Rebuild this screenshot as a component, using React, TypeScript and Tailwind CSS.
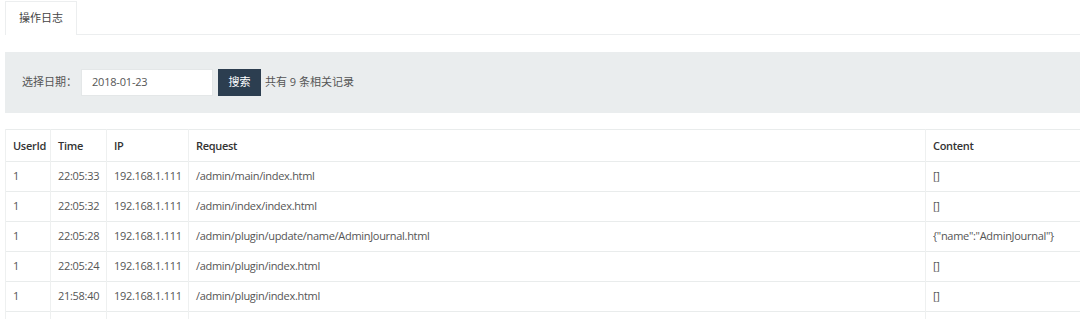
import React from "react";

const ROWS = [
  { uid: "1", time: "22:05:33", ip: "192.168.1.111", req: "/admin/main/index.html", content: "[]" },
  { uid: "1", time: "22:05:32", ip: "192.168.1.111", req: "/admin/index/index.html", content: "[]" },
  { uid: "1", time: "22:05:28", ip: "192.168.1.111", req: "/admin/plugin/update/name/AdminJournal.html", content: '{"name":"AdminJournal"}' },
  { uid: "1", time: "22:05:24", ip: "192.168.1.111", req: "/admin/plugin/index.html", content: "[]" },
  { uid: "1", time: "21:58:40", ip: "192.168.1.111", req: "/admin/plugin/index.html", content: "[]" },
];

export default function App() {
  return (
    <div
      className="w-[1080px] h-[319px] overflow-hidden bg-white text-[11px] text-[#555]"
      style={{ fontFamily: '"Open Sans", "Noto Sans CJK SC", sans-serif' }}
    >
      {/* tabs */}
      <div className="flex pl-[5px] pt-[1px]">
        <div className="w-[72px] h-[34px] border border-b-0 border-[#eceeef] flex items-center justify-center text-[#444]">
          操作日志
        </div>
        <div className="flex-1 border-b border-[#eceeef]" />
      </div>

      {/* search bar */}
      <div className="ml-[5px] mt-[17px] h-[61px] bg-[#eaedee] flex items-center pl-[17px]">
        <span className="text-[#555]">选择日期：</span>
        <div className="ml-[4px] w-[132px] h-[27px] bg-white border border-[#e4e7e8] flex items-center pl-[10px] text-[#555] tracking-[-0.2px]">
          2018-01-23
        </div>
        <button className="ml-[5px] w-[43px] h-[27px] bg-[#2c3e50] text-white flex items-center justify-center">
          搜索
        </button>
        <span className="ml-[4px] text-[#555]">共有 9 条相关记录</span>
      </div>

      {/* table */}
      <div className="ml-[5px] mt-[16px] w-[1120px] tracking-[-0.3px]">
        <table className="table-fixed w-full border-collapse">
          <colgroup>
            <col className="w-[45px]" />
            <col className="w-[56px]" />
            <col className="w-[82px]" />
            <col className="w-[737px]" />
            <col />
          </colgroup>
          <thead>
            <tr className="h-[32px] border-t border-b border-[#e9ecec]">
              {["UserId", "Time", "IP", "Request", "Content"].map((h) => (
                <th key={h} className="text-left font-semibold text-[#333] px-[7px] border-l border-[#eef0f0] leading-[17px]">
                  {h}
                </th>
              ))}
            </tr>
          </thead>
          <tbody>
            {ROWS.map((r, i) => (
              <tr key={i} className="h-[30px] border-b border-[#e9ecec]">
                <td className="px-[7px] border-l border-[#eef0f0] whitespace-nowrap">{r.uid}</td>
                <td className="px-[7px] border-l border-[#eef0f0] whitespace-nowrap">{r.time}</td>
                <td className="px-[7px] border-l border-[#eef0f0] whitespace-nowrap">{r.ip}</td>
                <td className="px-[7px] border-l border-[#eef0f0] whitespace-nowrap">{r.req}</td>
                <td className="px-[7px] border-l border-[#eef0f0] whitespace-nowrap">{r.content}</td>
              </tr>
            ))}
            <tr className="h-[30px] border-b border-[#e9ecec]">
              <td className="border-l border-[#eef0f0]" />
              <td className="border-l border-[#eef0f0]" />
              <td className="border-l border-[#eef0f0]" />
              <td className="border-l border-[#eef0f0]" />
              <td className="border-l border-[#eef0f0]" />
            </tr>
          </tbody>
        </table>
      </div>
    </div>
  );
}
